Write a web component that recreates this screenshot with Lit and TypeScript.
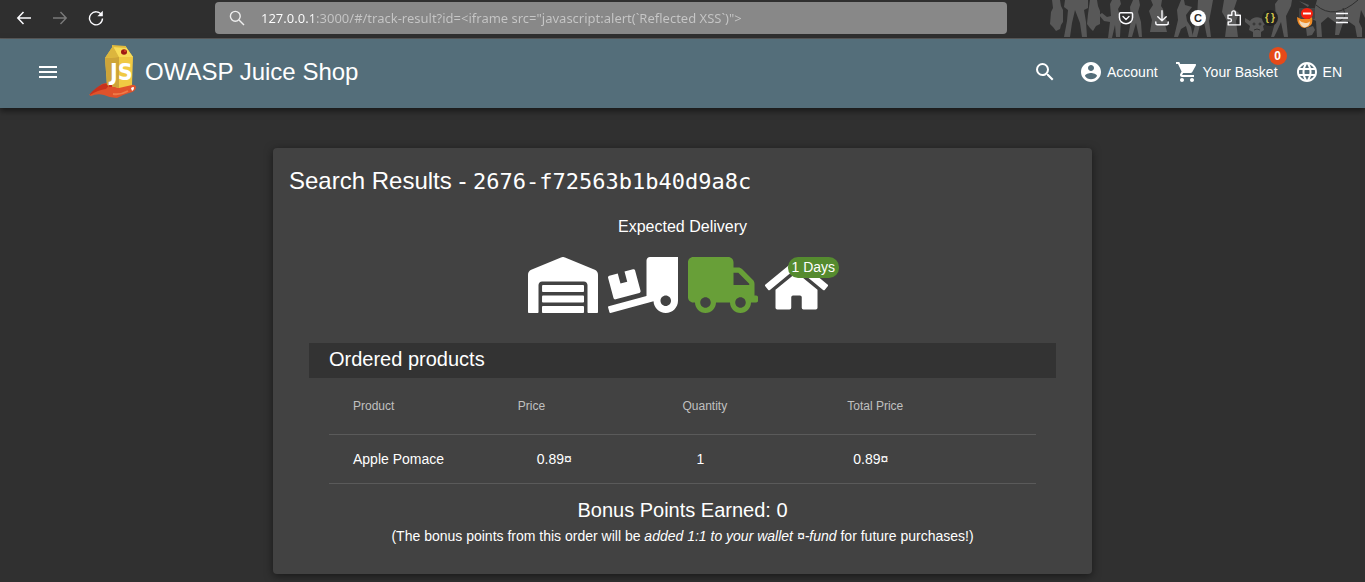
import { LitElement, html, css, svg } from "lit";
import { customElement, property } from "lit/decorators.js";

const icons = {
  menu: "M3 18h18v-2H3v2zm0-5h18v-2H3v2zm0-7v2h18V6H3z",
  search:
    "M15.5 14h-.79l-.28-.27A6.471 6.471 0 0 0 16 9.5 6.5 6.5 0 1 0 9.5 16c1.61 0 3.09-.59 4.23-1.57l.27.28v.79l5 4.99L20.49 19l-4.99-5zm-6 0C7.01 14 5 11.99 5 9.5S7.01 5 9.5 5 14 7.01 14 9.5 11.99 14 9.5 14z",
  account:
    "M12 2C6.48 2 2 6.48 2 12s4.48 10 10 10 10-4.48 10-10S17.52 2 12 2zm0 3c1.66 0 3 1.34 3 3s-1.34 3-3 3-3-1.34-3-3 1.34-3 3-3zm0 14.2a7.2 7.2 0 0 1-6-3.22c.03-1.99 4-3.08 6-3.08 1.99 0 5.97 1.09 6 3.08a7.2 7.2 0 0 1-6 3.22z",
  cart:
    "M7 18c-1.1 0-1.99.9-1.99 2S5.9 22 7 22s2-.9 2-2-.9-2-2-2zM1 2v2h2l3.6 7.59-1.35 2.45c-.16.28-.25.61-.25.96 0 1.1.9 2 2 2h12v-2H7.42c-.14 0-.25-.11-.25-.25l.03-.12.9-1.63h7.45c.75 0 1.41-.41 1.75-1.03l3.58-6.49A1.003 1.003 0 0 0 20 4H5.21l-.94-2H1zm16 16c-1.1 0-1.99.9-1.99 2s.89 2 1.99 2 2-.9 2-2-.9-2-2-2z",
  language:
    "M11.99 2C6.47 2 2 6.48 2 12s4.47 10 9.99 10C17.52 22 22 17.52 22 12S17.52 2 11.99 2zm6.93 6h-2.95a15.65 15.65 0 0 0-1.38-3.56A8.03 8.03 0 0 1 18.92 8zM12 4.04c.83 1.2 1.48 2.53 1.91 3.96h-3.82c.43-1.43 1.08-2.76 1.91-3.96zM4.26 14C4.1 13.36 4 12.69 4 12s.1-1.36.26-2h3.38c-.08.66-.14 1.32-.14 2 0 .68.06 1.34.14 2H4.26zm.82 2h2.95c.32 1.25.78 2.45 1.38 3.56A7.987 7.987 0 0 1 5.08 16zm2.95-8H5.08a7.987 7.987 0 0 1 4.33-3.56A15.65 15.65 0 0 0 8.03 8zM12 19.96c-.83-1.2-1.48-2.53-1.91-3.96h3.82c-.43 1.43-1.08 2.76-1.91 3.96zM14.34 14H9.66c-.09-.66-.16-1.32-.16-2 0-.68.07-1.35.16-2h4.68c.09.65.16 1.32.16 2 0 .68-.07 1.34-.16 2zm.25 5.56c.6-1.11 1.06-2.31 1.38-3.56h2.95a8.03 8.03 0 0 1-4.33 3.56zM16.36 14c.08-.66.14-1.32.14-2 0-.68-.06-1.34-.14-2h3.38c.16.64.26 1.31.26 2s-.1 1.36-.26 2h-3.38z",
};

const stages = {
  warehouse:
    "M504 352H136.4c-4.4 0-8 3.6-8 8l-.1 48c0 4.4 3.6 8 8 8H504c4.4 0 8-3.6 8-8v-48c0-4.4-3.6-8-8-8zm0 96H136.1c-4.4 0-8 3.6-8 8l-.1 48c0 4.4 3.6 8 8 8h368c4.4 0 8-3.6 8-8v-48c0-4.4-3.6-8-8-8zm0-192H136.6c-4.4 0-8 3.6-8 8l-.1 48c0 4.4 3.6 8 8 8H504c4.4 0 8-3.6 8-8v-48c0-4.4-3.6-8-8-8zm106.5-139L338.4 3.7a48.15 48.15 0 0 0-36.9 0L29.5 117C11.7 124.5 0 141.9 0 161.3V504c0 4.4 3.6 8 8 8h80c4.4 0 8-3.6 8-8V256c0-17.6 14.6-32 32.6-32h382.8c18 0 32.6 14.4 32.6 32v248c0 4.4 3.6 8 8 8h80c4.4 0 8-3.6 8-8V161.3c0-19.4-11.7-36.8-29.5-44.3z",
  loading:
    "M50.2 375.6c2.3 8.5 11.1 13.6 19.6 11.3l216.4-58c8.5-2.3 13.6-11.1 11.3-19.6l-49.7-185.5c-2.3-8.5-11.1-13.6-19.6-11.3L151 133.3l24.8 92.7-61.8 16.5-24.8-92.7-77.3 20.7C3.4 172.8-1.7 181.6.6 190.1l49.6 185.5zM384 0c-17.7 0-32 14.3-32 32v323.6L5.9 450c-4.3 1.2-6.8 5.6-5.6 9.8l12.6 46.3c1.2 4.3 5.6 6.8 9.8 5.6l393.7-107.4C418.8 464.1 467.6 512 528 512c61.9 0 112-50.1 112-112V0H384zm144 448c-26.5 0-48-21.5-48-48s21.5-48 48-48 48 21.5 48 48-21.5 48-48 48z",
  truck:
    "M624 352h-16V243.9c0-12.7-5.1-24.9-14.1-33.9L494 110.1c-9-9-21.2-14.1-33.9-14.1H416V48c0-26.5-21.5-48-48-48H48C21.5 0 0 21.5 0 48v320c0 26.5 21.5 48 48 48h16c0 53 43 96 96 96s96-43 96-96h128c0 53 43 96 96 96s96-43 96-96h48c8.8 0 16-7.2 16-16v-32c0-8.8-7.2-16-16-16zM160 464c-26.5 0-48-21.5-48-48s21.5-48 48-48 48 21.5 48 48-21.5 48-48 48zm320 0c-26.5 0-48-21.5-48-48s21.5-48 48-48 48 21.5 48 48-21.5 48-48 48zm80-208H416V144h44.1l99.9 99.9V256z",
  home:
    "M280.37 148.26L96 300.11V464a16 16 0 0 0 16 16l112.06-.29a16 16 0 0 0 15.92-16V368a16 16 0 0 1 16-16h64a16 16 0 0 1 16 16v95.64a16 16 0 0 0 16 16.05L464 480a16 16 0 0 0 16-16V300L295.67 148.26a12.19 12.19 0 0 0-15.3 0zM571.6 251.47L488 182.56V44.05a12 12 0 0 0-12-12h-56a12 12 0 0 0-12 12v72.61L318.47 43a48 48 0 0 0-61 0L4.34 251.47a12 12 0 0 0-1.6 16.9l25.5 31A12 12 0 0 0 45.15 301l235.22-193.74a12.19 12.19 0 0 1 15.3 0L530.9 301a12 12 0 0 0 16.9-1.6l25.5-31a12 12 0 0 0-1.7-16.93z",
};

const materialIcon = (d: string) =>
  html`<svg class="icon" width="24" height="24" viewBox="0 0 24 24" aria-hidden="true"><path fill="currentColor" d=${d} /></svg>`;

const stageIcon = (d: string, width: number) =>
  html`<svg class="stage" width=${(width * 56) / 512} height="56" viewBox="0 0 ${width} 512" aria-hidden="true"><path fill="currentColor" d=${d} /></svg>`;

const reset = css`
  :host { display: block; }
  * { box-sizing: border-box; }
  button, a { font: inherit; color: inherit; text-decoration: none; }
  button { border: 0; padding: 0; background: none; cursor: pointer; }
  svg { display: block; flex: none; }
`;

@customElement("browser-bar")
class BrowserBar extends LitElement {
  @property() url = "";

  static styles = [
    reset,
    css`
      .bar {
        position: relative;
        display: flex;
        align-items: center;
        height: 39px;
        padding: 0 5px 2px 6px;
        background: #2f2f2f;
        border-bottom: 1px solid #5b5b5b;
        color: #fbfbfe;
      }
      .theme { position: absolute; right: 0; top: 0; }
      .group { position: relative; display: flex; }
      .tool {
        display: flex;
        align-items: center;
        justify-content: center;
        width: 36px;
        height: 32px;
      }
      .dim { color: #7a7a7a; }
      .address {
        flex: 1;
        display: flex;
        align-items: center;
        height: 32px;
        margin: 0 101px;
        padding: 0 14px;
        border-radius: 4px;
        background: #888;
        gap: 16px;
      }
      .url {
        flex: 1;
        min-width: 0;
        height: 24px;
        padding: 0;
        border: 0;
        outline: 0;
        font: 13px/24px "Noto Sans", sans-serif;
        color: #fff;
        background: linear-gradient(90deg, #fff 52px, #c6c6c6 52px);
        -webkit-background-clip: text;
        background-clip: text;
        -webkit-text-fill-color: transparent;
      }
      .round {
        width: 16px;
        height: 16px;
        border-radius: 50%;
        background: #fff;
        color: #2b2b2b;
        font: bold 11px/16px "Liberation Sans", sans-serif;
        text-align: center;
      }
      .braces {
        display: flex;
        justify-content: center;
        gap: 2px;
        background: #222;
        color: #d8c84a;
        font-size: 10px;
        line-height: 15px;
      }
    `,
  ];

  render() {
    return html`
      <nav class="bar" aria-label="Browser">
        <svg class="theme" width="320" height="38" viewBox="0 0 320 38" fill="#585858" aria-hidden="true">
          <path d="M7 0h8l1 6 2 4v12l-2 3-1 4-4 2-3-4-3-3 1-12 2-4z" />
          <path d="M20 0h23v8l-4 2 2 12 1 15h-5l-2-14-5-13-3 13-2 14h-6l3-16 1-11-4-3z" />
          <path d="M45 0h7l1 6 2 5v13l-4 2-3 5-3-3-3-4 1-10z" />
          <path d="M57 13l5 4 4-1-1-12 2-4h8l1 4-3 5 3 10-1 18h-4l-1-12-3 13h-4l2-16-6-1-5-6z" />
          <path d="M85 7l3-7h6l1 5-2 7 3 10 1 15h-3l-3-14-4 14h-4l3-17z" />
          <path d="M106 0h11l-1 6 2 3 2 9 5 7-5-1 2 8h-17l2-12-3-9 4-6z" />
          <path d="M132 10l4-10h3l1 5 7 2-6 8 1 6 4 6 2 10h-4l-3-11-5 3-3 8h-4l4-17z" />
          <path d="M153 0h15l-2 11-2 10 2 16h-4l-3-15-4 3-3 12h-5l5-19z" />
          <path d="M179 0h13l-3 9 5 4-3 8 2 16h-13l2-16-5-9z" />
          <path d="M200 18l5 3c3-5 11-5 14 0l4-3-2 5-3 3 1 4-3 2v5h-8v-5l-4-2 1-4-5-4z" />
          <path d="M230 4l3-4h14l-1 6-5 10 2 21h-4l-3-15-4 9-3 6h-3l5-18z" />
          <path d="M272 0h48v18l-4-8-2 12 3 6v9h-5l-2-11-7-5-5 2-4 12h-4l1-12-8-6-7 6 1 14h-5l-1-16-6-3 4-7z" />
          <path d="M261 28l7-2 2 4-3 5-5 1zM254 1l10 4-1 2z" />
          <g fill="none" stroke="#2f2f2f"><path d="M271 5q18 16 42-5M298 8q5 10-5 14" /><circle cx="209" cy="24" r="1" /><circle cx="215" cy="24" r="1" /><path d="M209 30q3-2 6 0" /></g>
        </svg>
        <div class="group">
          <button class="tool" aria-label="Back">
            <svg width="16" height="16" viewBox="0 0 16 16" fill="none" stroke="currentColor" stroke-width="1.5"><path d="M15 8H2M7.5 2L1.8 8l5.7 6" /></svg>
          </button>
          <button class="tool dim" aria-label="Forward">
            <svg width="16" height="16" viewBox="0 0 16 16" fill="none" stroke="currentColor" stroke-width="1.4"><path d="M1 8h13M8.5 2l5.7 6-5.7 6" /></svg>
          </button>
          <button class="tool" aria-label="Reload">
            <svg width="16" height="16" viewBox="0 0 16 16" fill="none" stroke="currentColor" stroke-width="1.4"><path d="M13.6 5A6.5 6.5 0 1 0 14.5 8.5" /><path d="M14.8.8v5.4H9.4z" fill="currentColor" stroke="none" /></svg>
          </button>
        </div>
        <label class="address">
          <svg width="16" height="16" viewBox="0 0 16 16" fill="none" stroke="#eee" stroke-width="1.4" role="img" aria-label="Address"><circle cx="6.3" cy="6.3" r="4.9" /><path d="M10 10l5 5" /></svg>
          <input class="url" type="text" spellcheck="false" .value=${this.url} />
        </label>
        <div class="group">
          <button class="tool" aria-label="Pocket">
            <svg width="16" height="16" viewBox="0 0 16 16" fill="none" stroke="currentColor" stroke-width="1.4" stroke-linecap="round" stroke-linejoin="round"><path d="M2.6 2.7h10.8q1.2 0 1.2 1.2v3.6a6.6 6.2 0 0 1-13.2 0V3.9q0-1.2 1.2-1.2zM5 6.5l3 2.9 3-2.9" /></svg>
          </button>
          <button class="tool" aria-label="Downloads">
            <svg width="16" height="16" viewBox="0 0 16 16" fill="none" stroke="currentColor" stroke-width="1.4" stroke-linecap="round" stroke-linejoin="round"><path d="M8 .8v9.8M3.8 6.8L8 10.8l4.2-4M1.8 12v1.2q0 1.5 1.5 1.5h9.4q1.5 0 1.5-1.5V12" /></svg>
          </button>
          <button class="tool" aria-label="Extension C"><span class="round">C</span></button>
          <button class="tool" aria-label="Extensions">
            <svg width="16" height="16" viewBox="0 0 16 16" fill="none" stroke="currentColor" stroke-width="1.4" stroke-linejoin="round"><path d="M2 5.2h3.8V2.7a1.7 1.7 0 0 1 3.6 0v2.5h4.9v9.7H2.2v-3h1.6a1.6 1.6 0 0 0 0-3.300H2z" /></svg>
          </button>
          <button class="tool" aria-label="JSON viewer"><span class="round braces"><span>{</span><span>}</span></span></button>
          <button class="tool" aria-label="Proxy switcher">
            <svg width="18" height="20" viewBox="0 0 18 20">
              <rect x="2" y="0" width="16" height="11" rx="1" fill="#444" />
              <path d="M0 9l4 2h8l3-2q1 6-1 8-3 3-7 3Q0 18 0 9z" fill="#f08a24" />
              <path d="M2 12q3 3 6 3 4 0 5-2 0 5-5 6.5-5-1-6-7.5z" fill="#f3d9b8" />
              <ellipse cx="10" cy="5.500" rx="6" ry="5.500" fill="#f5200f" />
              <path d="M6 4.500h8v2H6z" fill="#fff" />
            </svg>
          </button>
          <button class="tool" aria-label="Application menu">
            <svg width="16" height="16" viewBox="0 0 16 16" stroke="currentColor" stroke-width="1.300"><path d="M2 3.500h12M2 8h12M2 12.500h12" /></svg>
          </button>
        </div>
      </nav>
    `;
  }
}

@customElement("shop-header")
class ShopHeader extends LitElement {
  @property({ type: Number }) basket = 0;

  static styles = [
    reset,
    css`
      :host { position: relative; }
      .header {
        display: flex;
        align-items: center;
        height: 69px;
        padding: 0 23px 3px 36px;
        background: #546e7a;
        color: #fff;
        box-shadow: 0 3px 6px rgba(0, 0, 0, 0.5);
        font: 14px/20px "Liberation Sans", Arial, sans-serif;
      }
      .home {
        display: flex;
        align-items: center;
        gap: 8px;
        margin-left: 29px;
        font-size: 24px;
        line-height: 32px;
      }
      .actions { display: flex; align-items: center; gap: 17px; margin-left: auto; }
      .action { display: flex; align-items: center; gap: 4px; white-space: nowrap; }
      .find { margin-right: 5px; }
      .label { position: relative; }
      .badge {
        position: absolute;
        right: -9px;
        top: -15px;
        width: 18px;
        height: 18px;
        border-radius: 50%;
        background: #e64a19;
        font-size: 12px;
        font-weight: bold;
        line-height: 18px;
        text-align: center;
      }
      .mark { font: bold 23px "DejaVu Sans Condensed", "DejaVu Sans", sans-serif; }
    `,
  ];

  render() {
    return html`
      <header class="header">
        <button aria-label="Open sidenav">${materialIcon(icons.menu)}</button>
        <a class="home" href="#/search">
          <svg width="48" height="56" viewBox="0 0 48 56" aria-hidden="true">
            <path d="M1 50q5-5 12-10l9-2 20 3q5-1 5 3-1 4-7 5-7 2-12 5-7 0-13-3-7-2-13 1-3-1-1-2z" fill="#e0522b" />
            <path d="M1 50q6-7 13-10l8-1-5 6q-8 1-16 6z" fill="#c8321d" />
            <path d="M24 50q8 1 15-3" fill="none" stroke="#ef7a48" stroke-width="2" />
            <path d="M42 44q3-2 3 0t-2 3z" fill="#fff" />
            <path d="M16 14L24 2l13 1 7 10-1 28-13 3-12-3z" fill="#f0c943" />
            <path d="M16 14l14-1v31l-12-3z" fill="#cda439" />
            <path d="M24 2L16 14l14-1z" fill="#dcb63e" />
            <path d="M24 2l13 1 7 10H30z" fill="#f8dc58" />
            <path d="M23 3V1l14 1v2z" fill="#e2bb3c" />
            <ellipse cx="35" cy="8" rx="3" ry="2.700" fill="#9e1b12" />
            <circle cx="36" cy="7" r="1" fill="#d8402a" />
            <path d="M20 39q2-2 3 0v4h-3z" fill="#c8321d" />
            ${svg`<text class="mark" x="21" y="36" fill="#fff">JS</text>`}
          </svg>
          <span>OWASP Juice Shop</span>
        </a>
        <div class="actions">
          <button class="find" aria-label="Search">${materialIcon(icons.search)}</button>
          <button class="action">${materialIcon(icons.account)}<span>Account</span></button>
          <a class="action" href="#/basket">
            ${materialIcon(icons.cart)}
            <span class="label">Your Basket<span class="badge">${this.basket}</span></span>
          </a>
          <button class="action">${materialIcon(icons.language)}<span>EN</span></button>
        </div>
      </header>
    `;
  }
}

interface Product {
  name: string;
  price: string;
  quantity: number;
  total: string;
}

@customElement("track-result")
class TrackResult extends LitElement {
  @property() orderId = "";
  @property({ type: Number }) days = 0;
  @property({ type: Number }) bonus = 0;
  @property({ attribute: false }) products: Product[] = [];

  static styles = [
    reset,
    css`
      .card {
        width: 60%;
        margin: 40px auto 0;
        padding: 16px 16px 25px;
        border-radius: 4px;
        background: #424242;
        box-shadow: 0 2px 8px rgba(0, 0, 0, 0.5);
        color: #fff;
        font: 14px/20px "Liberation Sans", Arial, sans-serif;
      }
      h1, h2, h3, p { margin: 0; font-weight: normal; }
      h1 { font-size: 24px; line-height: 34px; }
      code { font-family: "DejaVu Sans Mono", monospace; font-size: 22px; }
      .delivery { text-align: center; }
      .delivery h2 { margin-top: 18px; font-size: 16px; line-height: 20px; }
      .stages { display: flex; justify-content: center; gap: 10px; margin: 20px 0 30px; }
      .active { color: #689f38; }
      .goal { position: relative; margin: 0 10px 0 -3px; }
      .days {
        position: absolute;
        left: 23px;
        top: 0;
        padding: 0 4px;
        border-radius: 10px;
        background: #558b2f;
        line-height: 21px;
        white-space: nowrap;
      }
      .order { margin: 0 20px; }
      .order h2 {
        padding: 0 20px 3px;
        background: #333;
        font-size: 20px;
        line-height: 32px;
      }
      .rows { padding: 0 20px; }
      table { width: 100%; border-collapse: collapse; table-layout: fixed; }
      th, td { padding: 0; text-align: left; border-bottom: 1px solid #5a5a5a; }
      th { height: 56px; font-size: 12px; font-weight: normal; color: #c0c0c0; }
      td { height: 49px; }
      .edge { width: 24px; }
      .price { padding-left: 19px; }
      .quantity { padding-left: 14px; }
      .total { padding-left: 6px; }
      .bonus { padding-top: 13px; text-align: center; }
      .bonus h3 { font-size: 20px; line-height: 26px; }
      .bonus p { line-height: 26px; }
    `,
  ];

  render() {
    return html`
      <main class="card">
        <h1>Search Results - <code>${this.orderId}</code></h1>
        <section class="delivery">
          <h2>Expected Delivery</h2>
          <div class="stages">
            ${stageIcon(stages.warehouse, 640)} ${stageIcon(stages.loading, 640)}
            <span class="active">${stageIcon(stages.truck, 640)}</span>
            <span class="goal">${stageIcon(stages.home, 576)}<span class="days">${this.days} Days</span></span>
          </div>
        </section>
        <section class="order">
          <h2>Ordered products</h2>
          <div class="rows">
            <table>
              <colgroup><col class="edge" /><col /><col /><col /><col /><col class="edge" /></colgroup>
              <thead>
                <tr><th></th><th>Product</th><th>Price</th><th>Quantity</th><th>Total Price</th><th></th></tr>
              </thead>
              <tbody>
                ${this.products.map(
                  (p) => html`<tr>
                    <td></td>
                    <td>${p.name}</td>
                    <td class="price">${p.price}</td>
                    <td class="quantity">${p.quantity}</td>
                    <td class="total">${p.total}</td>
                    <td></td>
                  </tr>`
                )}
              </tbody>
            </table>
          </div>
        </section>
        <section class="bonus">
          <h3>Bonus Points Earned: ${this.bonus}</h3>
          <p>(The bonus points from this order will be <em>added 1:1 to your wallet ¤-fund</em> for future purchases!)</p>
        </section>
      </main>
    `;
  }
}

@customElement("app-root")
class AppRoot extends LitElement {
  static styles = css`
    :host { display: flow-root; min-height: 100vh; background: #303030; }
  `;

  private products: Product[] = [{ name: "Apple Pomace", price: "0.89¤", quantity: 1, total: "0.89¤" }];

  render() {
    return html`
      <browser-bar url=${'127.0.0.1:3000/#/track-result?id=<iframe src="javascript:alert(`Reflected XSS`)">'}></browser-bar>
      <shop-header .basket=${0}></shop-header>
      <track-result .orderId=${"2676-f72563b1b40d9a8c"} .days=${1} .bonus=${0} .products=${this.products}></track-result>
    `;
  }
}
